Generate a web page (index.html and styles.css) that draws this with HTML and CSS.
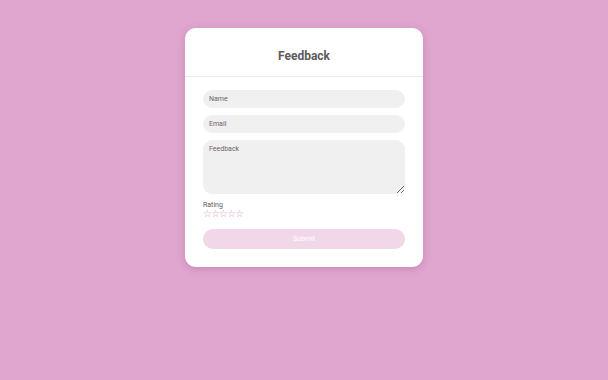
FILE: index.html
```html
<!DOCTYPE html>
<html>
<head>
<meta charset="utf-8">
<link rel="stylesheet" href="styles.css">
</head>
<body>
<div class="page">
  <div class="card">
    <div class="card-header">
      <h1 class="title">Feedback</h1>
    </div>
    <form class="card-body">
      <input class="field" type="text" placeholder="Name">
      <input class="field" type="email" placeholder="Email">
      <textarea class="field area" placeholder="Feedback"></textarea>
      <div class="rating">
        <div class="rating-label">Rating</div>
        <div class="stars"><span>☆</span><span>☆</span><span>☆</span><span>☆</span><span>☆</span></div>
      </div>
      <button class="submit" type="button">Submit</button>
    </form>
  </div>
</div>
</body>
</html>
```

FILE: styles.css
```css
html, body {
  margin: 0;
  padding: 0;
  height: 100%;
}
body {
  background: #e1a6cf;
  font-family: Roboto, "Liberation Sans", sans-serif;
}
.page {
  display: flex;
  justify-content: center;
  padding-top: 28px;
}
.card {
  width: 238px;
  background: #ffffff;
  border-radius: 11px;
  box-shadow: 0 2px 8px rgba(120, 60, 100, 0.25);
}
.card-header {
  height: 48px;
  border-bottom: 1px solid #ececec;
  display: flex;
  align-items: center;
  justify-content: center;
}
.title {
  margin: 0;
  font-size: 12px;
  font-weight: 700;
  color: #5e5a5d;
  padding-top: 8px;
}
.card-body {
  display: flex;
  flex-direction: column;
  padding: 13px 18px 18px 18px;
  margin: 0;
}
.field {
  box-sizing: border-box;
  width: 202px;
  height: 18px;
  border: none;
  outline: none;
  background: #f0f0f0;
  border-radius: 9px;
  padding: 0 6px;
  font-family: Roboto, "Liberation Sans", sans-serif;
  font-size: 7px;
  color: #6e6269;
  margin: 0 0 7px 0;
}
.field::placeholder {
  color: #6e6269;
}
.area {
  height: 54px;
  border-radius: 9px;
  padding: 5px 6px;
  resize: vertical;
  margin-bottom: 7px;
  display: block;
}
.rating {
  display: flex;
  flex-direction: column;
}
.rating-label {
  font-size: 7px;
  color: #5e5a5d;
  line-height: 8px;
}
.stars {
  display: flex;
  font-size: 10px;
  line-height: 9px;
  color: #d990c2;
  font-family: "DejaVu Sans", sans-serif;
}
.stars span {
  width: 8px;
  display: inline-block;
}
.submit {
  margin-top: 11px;
  width: 202px;
  height: 20px;
  border: none;
  border-radius: 10px;
  background: #f2d7e8;
  color: #ffffff;
  font-family: Roboto, "Liberation Sans", sans-serif;
  font-size: 7px;
  padding: 0;
}
```
